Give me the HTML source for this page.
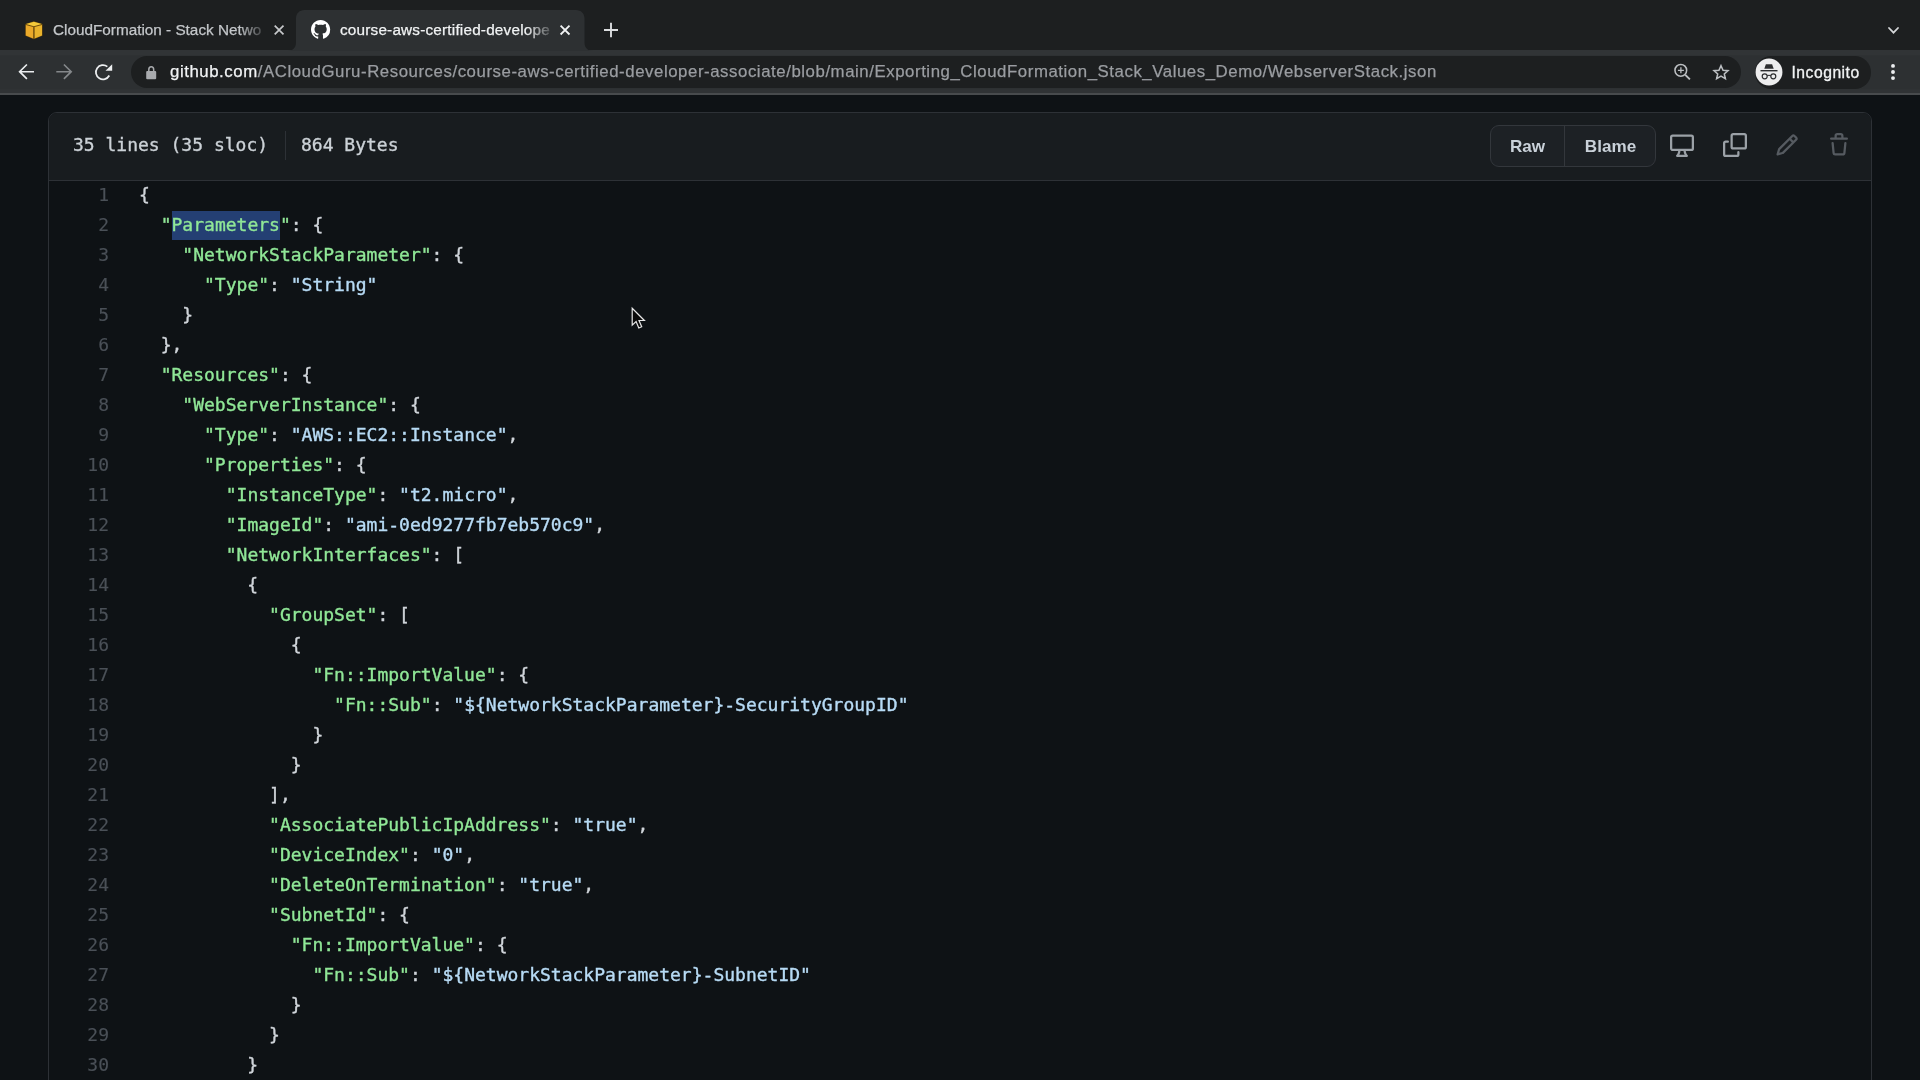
<!DOCTYPE html>
<html lang="en">
<head>
<meta charset="utf-8">
<title>course-aws-certified-developer-associate/WebserverStack.json</title>
<style>
*{box-sizing:border-box;margin:0;padding:0}
html,body{width:1920px;height:1080px;overflow:hidden;background:#0e1215}
body{position:relative;will-change:transform;font-family:"Liberation Sans",sans-serif;color:#c9d1d9}
/* ---------- browser chrome ---------- */
#tabstrip{position:absolute;left:0;top:0;width:1920px;height:50px;background:#1d1f20}
#toolbar{position:absolute;left:0;top:50px;width:1920px;height:45px;background:linear-gradient(to bottom,#313436 0,#313436 4.5px,#2d3032 6px,#2d3032 38.5px,#303335 40px);border-bottom:2px solid #484b4d}
.tabtxt{position:absolute;top:20px;height:20px;line-height:20px;font-size:15.3px;-webkit-text-stroke:.25px;white-space:nowrap;overflow:hidden;
  -webkit-mask-image:linear-gradient(to right,#000 0,#000 186px,rgba(0,0,0,.15) 212px);mask-image:linear-gradient(to right,#000 0,#000 186px,rgba(0,0,0,.15) 212px)}
#omni{position:absolute;left:130.5px;top:56px;width:1610.5px;height:32px;border-radius:16px;background:#1d1f20}
#url{position:absolute;left:170px;top:61px;height:22px;line-height:22px;font-size:16.8px;letter-spacing:.565px;-webkit-text-stroke:.25px;white-space:nowrap;color:#9a9da1}
#url b{font-weight:normal;color:#f1f3f4}
#incog{position:absolute;left:1754.5px;top:56px;width:116px;height:32.5px;border-radius:16.25px;background:#1d1f20}
#incog .t{position:absolute;left:37px;top:5.5px;height:22px;line-height:22px;font-size:15.7px;letter-spacing:.5px;-webkit-text-stroke:.3px;color:#f1f3f4}
/* ---------- page ---------- */
#box{position:absolute;left:48px;top:112px;width:1824px;height:1000px;border:1px solid #2d3136;border-radius:9px;background:#0e1215;overflow:hidden}
#hdr{position:absolute;left:0;top:0;width:100%;height:68px;background:#181c1f;border-bottom:1px solid #2d3136}
.info{position:absolute;top:17px;height:30px;line-height:30px;font-family:"DejaVu Sans Mono","Liberation Mono",monospace;font-size:18px;white-space:pre;color:#ccd2d7;-webkit-text-stroke:.35px}
#div{position:absolute;left:235.5px;top:18px;width:1px;height:29px;background:#2d3136}
#btns{position:absolute;left:1441px;top:12px;width:166px;height:42px;border:1px solid #33373c;border-radius:9px;background:#1d2125}
#btns span{position:absolute;top:0;height:40px;line-height:41px;font-size:17.1px;font-weight:bold;color:#c9d1d9;text-align:center}
#code{position:absolute;left:0;top:67px;width:100%}
.ln{height:30px;line-height:30px;-webkit-text-stroke:.38px;font-family:"DejaVu Sans Mono","Liberation Mono",monospace;font-size:18px;white-space:pre}
.n{display:inline-block;width:75px;padding-right:15px;text-align:right;color:#4a5057;-webkit-text-stroke:.15px}
.c{padding-left:15px;color:#d0d5da}
.k{color:#90e797}
.s{color:#b7dbf5}
.sel{background:#243f73;padding:3px 0 5px}
svg{position:absolute;overflow:visible}
</style>
</head>
<body>
<div id="tabstrip"></div>
<div id="toolbar"></div>
<svg width="320" height="41" style="left:280px;top:10px" viewBox="280 10 320 41"><path d="M287.5 51c5 0 8.5-3 8.5-8.500V18.500c0-5 3.500-8.500 8.500-8.500h271.500c5 0 8.500 3.500 8.500 8.500V42.500c0 5.500 3.500 8.500 8.500 8.500z" fill="#2d3032"/></svg>
<div class="tabtxt" style="left:53px;width:212px;color:#c4c7ca">CloudFormation - Stack Netwo</div>
<div class="tabtxt" style="left:340px;width:212px;letter-spacing:.2px;color:#f1f3f4">course-aws-certified-develope</div>
<div id="omni"></div>
<div id="url"><b>github.com</b>/ACloudGuru-Resources/course-aws-certified-developer-associate/blob/main/Exporting_CloudFormation_Stack_Values_Demo/WebserverStack.json</div>
<div id="incog"><span class="t">Incognito</span></div>
<!-- tab 1 favicon: AWS CloudFormation cube -->
<svg width="20" height="20" style="left:23.500px;top:20px" viewBox="23.500 20 20 20">
  <path d="M33.400 21.300 42 24 42 35.800 33.400 39.200 24.800 35.800 24.800 24z" fill="#6b4a0c"/>
  <path d="M33.400 21.700 41.300 24.100 33.400 26.300 25.500 24.100z" fill="#f3c93a"/>
  <path d="M25.300 25 32.700 27.100 32.700 38.400 25.300 35.400z" fill="#eaa92a"/>
  <path d="M41.500 25 34.100 27.100 34.100 38.400 41.500 35.400z" fill="#e9b32c"/>
</svg>
<!-- tab close buttons, new tab, chevron -->
<svg width="12" height="12" style="left:272.500px;top:24.100px" viewBox="0 0 12 12"><path d="M1.700 1.600l8.800 8.800M10.500 1.600l-8.800 8.800" stroke="#c6c8ca" stroke-width="1.700" fill="none"/></svg>
<svg width="12" height="12" style="left:559.100px;top:24.100px" viewBox="0 0 12 12"><path d="M1.600 1.600l8.900 8.900M10.500 1.600l-8.900 8.900" stroke="#f1f3f4" stroke-width="1.800" fill="none"/></svg>
<svg width="16" height="16" style="left:602.800px;top:22.100px" viewBox="0 0 16 16"><path d="M1 8h14M8 .800v14.400" stroke="#dcdee0" stroke-width="1.900" fill="none"/></svg>
<svg width="14" height="10" style="left:1887px;top:25.600px" viewBox="0 0 14 10"><path d="M2 2l4.500 4.700 4.500-4.700" stroke="#d5d7d9" stroke-width="1.800" stroke-linecap="round" stroke-linejoin="miter" fill="none"/></svg>
<!-- github favicon -->
<svg width="19.200" height="19.200" style="left:311px;top:20.100px" viewBox="0 0 16 16"><path fill="#fff" fill-rule="evenodd" d="M8 0C3.580 0 0 3.580 0 8c0 3.540 2.290 6.530 5.470 7.590.400.070.550-.170.550-.380 0-.190-.010-.820-.010-1.490-2.010.370-2.530-.490-2.690-.940-.090-.230-.480-.940-.820-1.130-.280-.150-.680-.520-.010-.530.630-.010 1.080.580 1.230.820.720 1.210 1.870.870 2.330.660.070-.520.280-.870.510-1.070-1.780-.200-3.640-.890-3.640-3.950 0-.870.310-1.590.820-2.150-.080-.200-.360-1.020.080-2.120 0 0 .670-.210 2.200.820.640-.180 1.320-.270 2-.270.680 0 1.360.090 2 .270 1.530-1.040 2.200-.820 2.200-.820.440 1.100.160 1.920.080 2.120.510.560.820 1.270.820 2.150 0 3.070-1.870 3.750-3.650 3.950.290.250.540.730.540 1.480 0 1.070-.010 1.930-.010 2.200 0 .210.150.460.550.380A8.013 8.013 0 0016 8c0-4.420-3.580-8-8-8z"/></svg>
<!-- nav: back, forward, reload -->
<svg width="18" height="18" style="left:17px;top:63px" viewBox="17 63 18 18"><path d="M34 71.700H19.500M26.900 64.500l-7.300 7.200 7.300 7.200" stroke="#eceef0" stroke-width="1.650" fill="none"/></svg>
<svg width="18" height="18" style="left:55px;top:63px" viewBox="55 63 18 18"><path d="M56.300 71.700H70.800M63.900 64.500l7.300 7.200-7.300 7.200" stroke="#85888b" stroke-width="1.650" fill="none"/></svg>
<svg width="22" height="20" style="left:93px;top:62px" viewBox="93 62 22 20"><path d="M107.37 66.61A7.10 7.10 0 1 0 109.27 75.53" stroke="#eceef0" stroke-width="1.750" fill="none"/><path d="M112.200 64.300v6.500h-6.700z" fill="#eceef0"/></svg>
<!-- lock -->
<svg width="12" height="15" style="left:145px;top:65px" viewBox="145 65 12 15"><rect x="146.200" y="70.900" width="10" height="8.300" rx="1" fill="#a9abae"/><path d="M148.800 71.500v-1.800a2.450 2.900 0 0 1 4.900 0v1.800" stroke="#a9abae" stroke-width="1.500" fill="none"/></svg>
<!-- zoom + star -->
<svg width="20" height="20" style="left:1672px;top:62px" viewBox="1672 62 20 20"><circle cx="1680.800" cy="70.300" r="5.850" stroke="#bcbfc2" stroke-width="1.550" fill="none"/><path d="M1685.300 74.800l4.600 4.600" stroke="#bcbfc2" stroke-width="1.900" fill="none"/><path d="M1677.900 70.300h6M1680.900 67.300v6" stroke="#bcbfc2" stroke-width="1.300" fill="none"/></svg>
<svg width="20" height="20" style="left:1710.600px;top:62px" viewBox="1710.600 62 20 20"><path d="M1720.600 65.700l2.050 4.500 4.950.500-3.700 3.300 1.050 4.650-4.350-2.500-4.350 2.500 1.050-4.650-3.700-3.300 4.950-.500z" stroke="#bcbfc2" stroke-width="1.550" stroke-linejoin="miter" fill="none"/></svg>
<!-- incognito avatar -->
<svg width="28" height="28" style="left:1754.800px;top:58px" viewBox="1754.800 58 28 28"><circle cx="1768.800" cy="72" r="13.450" fill="#ededee"/>
  <path d="M1765.700 64.300h6.200l1.600 4.500h-9.400z" fill="#2c2d2f"/><path d="M1760.300 70.700h17" stroke="#2c2d2f" stroke-width="1.400" fill="none"/>
  <circle cx="1764.500" cy="76.300" r="2.500" stroke="#2c2d2f" stroke-width="1.200" fill="none"/><circle cx="1773.100" cy="76.300" r="2.500" stroke="#2c2d2f" stroke-width="1.200" fill="none"/><path d="M1767 75.700q1.800-.9 3.600 0" stroke="#2c2d2f" stroke-width="1.100" fill="none"/></svg>
<!-- menu dots -->
<svg width="6" height="18" style="left:1890.400px;top:63px" viewBox="0 0 6 18"><circle cx="3" cy="2.900" r="1.950" fill="#eceef0"/><circle cx="3" cy="9" r="1.950" fill="#eceef0"/><circle cx="3" cy="15.100" r="1.950" fill="#eceef0"/></svg>

<div id="box">
  <div id="hdr">
    <div class="info" style="left:24px">35 lines (35 sloc)</div>
    <div id="div"></div>
    <div class="info" style="left:252px">864 Bytes</div>
    <div id="btns"><span style="left:0;width:73px">Raw</span><span style="left:73px;width:92px;border-left:1px solid #33373c">Blame</span></div>
  </div>
  <div id="code">
<div class="ln"><span class="n">1</span><span class="c">{</span></div>
<div class="ln"><span class="n">2</span><span class="c">  <span class="k">"</span><span class="k sel">Parameters</span><span class="k">"</span>: {</span></div>
<div class="ln"><span class="n">3</span><span class="c">    <span class="k">"NetworkStackParameter"</span>: {</span></div>
<div class="ln"><span class="n">4</span><span class="c">      <span class="k">"Type"</span>: <span class="s">"String"</span></span></div>
<div class="ln"><span class="n">5</span><span class="c">    }</span></div>
<div class="ln"><span class="n">6</span><span class="c">  },</span></div>
<div class="ln"><span class="n">7</span><span class="c">  <span class="k">"Resources"</span>: {</span></div>
<div class="ln"><span class="n">8</span><span class="c">    <span class="k">"WebServerInstance"</span>: {</span></div>
<div class="ln"><span class="n">9</span><span class="c">      <span class="k">"Type"</span>: <span class="s">"AWS::EC2::Instance"</span>,</span></div>
<div class="ln"><span class="n">10</span><span class="c">      <span class="k">"Properties"</span>: {</span></div>
<div class="ln"><span class="n">11</span><span class="c">        <span class="k">"InstanceType"</span>: <span class="s">"t2.micro"</span>,</span></div>
<div class="ln"><span class="n">12</span><span class="c">        <span class="k">"ImageId"</span>: <span class="s">"ami-0ed9277fb7eb570c9"</span>,</span></div>
<div class="ln"><span class="n">13</span><span class="c">        <span class="k">"NetworkInterfaces"</span>: [</span></div>
<div class="ln"><span class="n">14</span><span class="c">          {</span></div>
<div class="ln"><span class="n">15</span><span class="c">            <span class="k">"GroupSet"</span>: [</span></div>
<div class="ln"><span class="n">16</span><span class="c">              {</span></div>
<div class="ln"><span class="n">17</span><span class="c">                <span class="k">"Fn::ImportValue"</span>: {</span></div>
<div class="ln"><span class="n">18</span><span class="c">                  <span class="k">"Fn::Sub"</span>: <span class="s">"${NetworkStackParameter}-SecurityGroupID"</span></span></div>
<div class="ln"><span class="n">19</span><span class="c">                }</span></div>
<div class="ln"><span class="n">20</span><span class="c">              }</span></div>
<div class="ln"><span class="n">21</span><span class="c">            ],</span></div>
<div class="ln"><span class="n">22</span><span class="c">            <span class="k">"AssociatePublicIpAddress"</span>: <span class="s">"true"</span>,</span></div>
<div class="ln"><span class="n">23</span><span class="c">            <span class="k">"DeviceIndex"</span>: <span class="s">"0"</span>,</span></div>
<div class="ln"><span class="n">24</span><span class="c">            <span class="k">"DeleteOnTermination"</span>: <span class="s">"true"</span>,</span></div>
<div class="ln"><span class="n">25</span><span class="c">            <span class="k">"SubnetId"</span>: {</span></div>
<div class="ln"><span class="n">26</span><span class="c">              <span class="k">"Fn::ImportValue"</span>: {</span></div>
<div class="ln"><span class="n">27</span><span class="c">                <span class="k">"Fn::Sub"</span>: <span class="s">"${NetworkStackParameter}-SubnetID"</span></span></div>
<div class="ln"><span class="n">28</span><span class="c">              }</span></div>
<div class="ln"><span class="n">29</span><span class="c">            }</span></div>
<div class="ln"><span class="n">30</span><span class="c">          }</span></div>
  </div>
</div>
<svg width="24" height="24" style="left:1670px;top:133px" viewBox="0 0 16 16"><path fill="#9ba1a7" fill-rule="evenodd" d="M1.750 2.500h12.500a.25.25 0 01.25.25v7.500a.25.25 0 01-.25.25H1.750a.25.25 0 01-.25-.25v-7.500a.25.25 0 01.25-.25zM14.250 1H1.750A1.750 1.750 0 000 2.750v7.500C0 11.216.784 12 1.750 12h3.727c-.100 1.041-.520 1.872-1.292 2.757A.75.75 0 004.750 16h6.500a.75.75 0 00.565-1.243c-.772-.885-1.193-1.716-1.292-2.757h3.727A1.750 1.750 0 0016 10.250v-7.500A1.750 1.750 0 0014.250 1zM9.018 12H6.982a5.720 5.720 0 01-.765 2.500h3.566a5.720 5.720 0 01-.765-2.500z"/></svg>
<svg width="24" height="24" style="left:1723px;top:133px" viewBox="0 0 16 16"><path fill="#9ba1a7" fill-rule="evenodd" d="M0 6.750C0 5.784.784 5 1.750 5h1.500a.75.75 0 010 1.500h-1.500a.25.25 0 00-.25.250v7.500c0 .138.112.250.250.250h7.500a.25.25 0 00.250-.250v-1.500a.75.75 0 011.500 0v1.500A1.750 1.750 0 019.250 16h-7.500A1.750 1.750 0 010 14.250v-7.500z"/><path fill="#9ba1a7" fill-rule="evenodd" d="M5 1.750C5 .784 5.784 0 6.750 0h7.500C15.216 0 16 .784 16 1.750v7.500A1.750 1.750 0 0114.250 11h-7.500A1.750 1.750 0 015 9.250v-7.500zm1.750-.250a.25.25 0 00-.250.250v7.500c0 .138.112.250.250.250h7.500a.25.25 0 00.250-.250v-7.500a.25.25 0 00-.250-.250h-7.500z"/></svg>
<svg width="24" height="24" style="left:1775px;top:133px" viewBox="0 0 16 16"><path fill="#565b61" fill-rule="evenodd" d="M11.013 1.427a1.750 1.750 0 012.474 0l1.086 1.086a1.750 1.750 0 010 2.474l-8.610 8.610c-.210.210-.470.364-.756.445l-3.251.930a.75.75 0 01-.927-.928l.929-3.250a1.750 1.750 0 01.445-.758l8.610-8.610zm1.414 1.060a.25.25 0 00-.354 0L10.811 3.750l1.439 1.440 1.263-1.263a.25.25 0 000-.354l-1.086-1.086zM11.189 6.250L9.750 4.810l-6.286 6.287a.25.25 0 00-.064.108l-.558 1.953 1.953-.558a.249.249 0 00.108-.064l6.286-6.286z"/></svg>
<svg width="24" height="24" style="left:1827px;top:133px" viewBox="0 0 16 16"><path fill="#565b61" fill-rule="evenodd" d="M6.500 1.750a.25.25 0 01.250-.250h2.500a.25.25 0 01.250.250V3h-3V1.750zm4.500 0V3h2.250a.75.75 0 010 1.500H2.750a.75.75 0 010-1.500H5V1.750C5 .784 5.784 0 6.750 0h2.500C10.216 0 11 .784 11 1.750zM4.496 6.675a.75.75 0 10-1.492.150l.660 6.600A1.750 1.750 0 005.405 15h5.190c.900 0 1.652-.681 1.741-1.576l.660-6.600a.75.750 0 00-1.492-.149l-.660 6.600a.25.25 0 01-.249.225h-5.190a.25.25 0 01-.249-.225l-.660-6.600z"/></svg>

<svg width="16" height="24" style="left:631px;top:307px" viewBox="0 0 16 24"><path d="M1.200 1.300V18.200l3.900-3.700 2.700 6.500 2.900-1.200-2.700-6.300h5.400z" fill="#0a0a0a" stroke="#e6e6e6" stroke-width="1.200" stroke-linejoin="miter"/></svg>

</body>
</html>
